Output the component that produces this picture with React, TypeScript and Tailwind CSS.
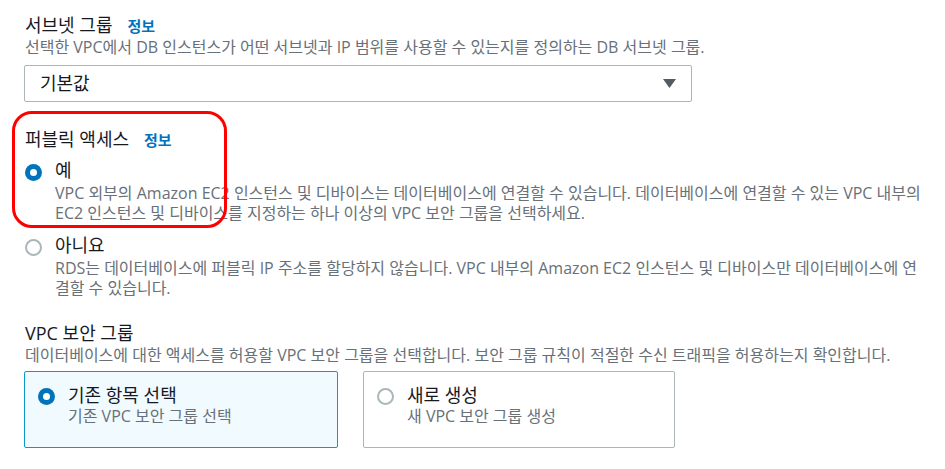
import React from "react";

function Radio({ checked, card }: { checked: boolean; card?: boolean }) {
  const mt = card ? "mt-[4px]" : "mt-[5px]";
  return checked ? (
    <span className={`${mt} flex h-[17px] w-[17px] shrink-0 items-center justify-center rounded-full bg-[#0073bb]`}>
      <span className="h-[7px] w-[7px] rounded-full bg-white" />
    </span>
  ) : (
    <span className={`${mt} h-[17px] w-[17px] shrink-0 rounded-full border-2 border-[#aab7b8] bg-white`} />
  );
}

function Heading({ text, info }: { text: string; info?: boolean }) {
  return (
    <div className="flex items-baseline gap-[15px] whitespace-nowrap text-[18px] leading-[22px] text-[#16191f]">
      <span>{text}</span>
      {info && <span className="text-[15px] font-bold text-[#0073bb]">정보</span>}
    </div>
  );
}

function Option({
  checked,
  label,
  lines,
  className,
}: {
  checked: boolean;
  label: string;
  lines: string[];
  className: string;
}) {
  return (
    <div className={`flex gap-[13px] ${className}`}>
      <Radio checked={checked} />
      <div className="flex flex-col">
        <span className="text-[18px] leading-[22px] text-[#16191f]">{label}</span>
        <div className="mt-[2px] flex flex-col whitespace-nowrap text-[16px] leading-[20px] text-[#687078]">
          {lines.map((l) => (
            <span key={l}>{l}</span>
          ))}
        </div>
      </div>
    </div>
  );
}

function Tile({ checked, label, sub, className }: { checked: boolean; label: string; sub: string; className: string }) {
  return (
    <div className={`flex h-[77px] gap-[13px] rounded-[2px] border pl-[13px] pt-[12px] ${className}`}>
      <Radio checked={checked} card />
      <div className="flex flex-col whitespace-nowrap">
        <span className="text-[18px] leading-[22px] text-[#16191f]">{label}</span>
        <span className="text-[16px] leading-[20px] text-[#687078]">{sub}</span>
      </div>
    </div>
  );
}

export default function App() {
  return (
    <div className="relative h-[469px] w-[945px] overflow-hidden bg-white pl-[25px] pt-[14px] font-['Open_Sans','Noto_Sans_CJK_KR',sans-serif]">
      <Heading text="서브넷 그룹" info />
      <div className="whitespace-nowrap text-[16px] leading-[20px] text-[#687078]">
        선택한 VPC에서 DB 인스턴스가 어떤 서브넷과 IP 범위를 사용할 수 있는지를 정의하는 DB 서브넷 그룹.
      </div>
      <div className="-ml-px mt-[8px] flex h-[37px] w-[668px] items-center justify-between rounded-[2px] border border-[#aab7b8] pl-[15px] pr-[15px] text-[18px] text-[#16191f]">
        <span>기본값</span>
        <svg width="13" height="9" viewBox="0 0 13 9">
          <path d="M0 0 H13 L6.5 9 Z" fill="#545b64" />
        </svg>
      </div>

      <div className="mt-[26px]">
        <Heading text="퍼블릭 액세스" info />
      </div>
      <Option
        className="mt-[8px]"
        checked
        label="예"
        lines={[
          "VPC 외부의 Amazon EC2 인스턴스 및 디바이스는 데이터베이스에 연결할 수 있습니다. 데이터베이스에 연결할 수 있는 VPC 내부의",
          "EC2 인스턴스 및 디바이스를 지정하는 하나 이상의 VPC 보안 그룹을 선택하세요.",
        ]}
      />
      <Option
        className="mt-[11px]"
        checked={false}
        label="아니요"
        lines={[
          "RDS는 데이터베이스에 퍼블릭 IP 주소를 할당하지 않습니다. VPC 내부의 Amazon EC2 인스턴스 및 디바이스만 데이터베이스에 연",
          "결할 수 있습니다.",
        ]}
      />

      <div className="mt-[24px]">
        <Heading text="VPC 보안 그룹" />
      </div>
      <div className="mt-px whitespace-nowrap text-[16px] leading-[20px] text-[#687078]">
        데이터베이스에 대한 액세스를 허용할 VPC 보안 그룹을 선택합니다. 보안 그룹 규칙이 적절한 수신 트래픽을 허용하는지 확인합니다.
      </div>
      <div className="-ml-px mt-[6px] flex gap-[25px]">
        <Tile className="w-[314px] border-[#0a9bc8] bg-[#f1faff]" checked label="기존 항목 선택" sub="기존 VPC 보안 그룹 선택" />
        <Tile className="w-[312px] border-[#aab7b8] bg-white" checked={false} label="새로 생성" sub="새 VPC 보안 그룹 생성" />
      </div>

      <div className="pointer-events-none absolute left-[12px] top-[111px] h-[117px] w-[215px] rounded-[20px] border-[3px] border-[#ff0000]" />
    </div>
  );
}
